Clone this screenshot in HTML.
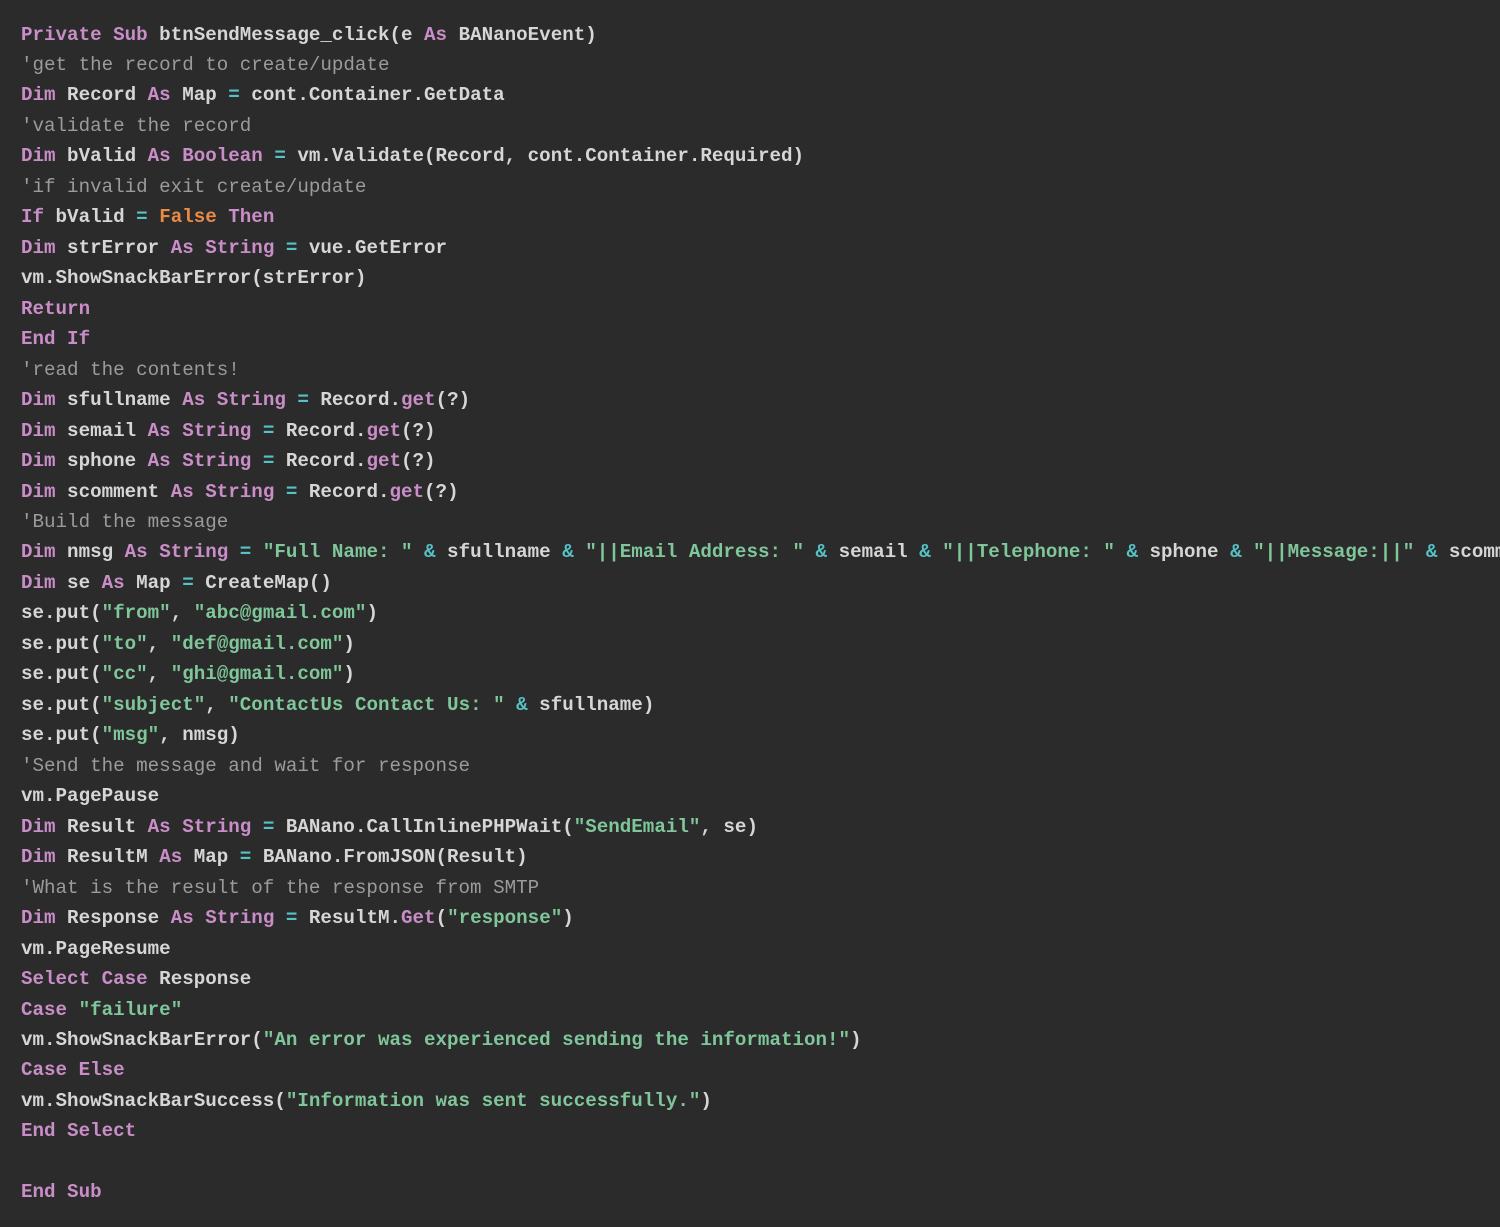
<!DOCTYPE html>
<html><head><meta charset="utf-8"><style>
html,body{margin:0;padding:0;background:#2b2b2b;width:1500px;height:1227px;overflow:hidden}
pre{margin:0;padding:19.5px 0 0 21px;font-family:"Liberation Mono",monospace;font-size:19.2px;line-height:30.47px;color:#d6d6d6;font-weight:bold;white-space:pre}
.k{color:#c98dc8}.o{color:#56c2c6}.s{color:#7fc79a}.c{color:#9b9b9b;font-weight:normal}.f{color:#e98b45}
</style></head><body><pre><span class="k">Private Sub</span> btnSendMessage_click(e <span class="k">As</span> BANanoEvent)
<span class="c">'get the record to create/update</span>
<span class="k">Dim</span> Record <span class="k">As</span> Map <span class="o">=</span> cont.Container.GetData
<span class="c">'validate the record</span>
<span class="k">Dim</span> bValid <span class="k">As</span> <span class="k">Boolean</span> <span class="o">=</span> vm.Validate(Record, cont.Container.Required)
<span class="c">'if invalid exit create/update</span>
<span class="k">If</span> bValid <span class="o">=</span> <span class="f">False</span> <span class="k">Then</span>
<span class="k">Dim</span> strError <span class="k">As</span> <span class="k">String</span> <span class="o">=</span> vue.GetError
vm.ShowSnackBarError(strError)
<span class="k">Return</span>
<span class="k">End If</span>
<span class="c">'read the contents!</span>
<span class="k">Dim</span> sfullname <span class="k">As</span> <span class="k">String</span> <span class="o">=</span> Record.<span class="k">get</span>(?)
<span class="k">Dim</span> semail <span class="k">As</span> <span class="k">String</span> <span class="o">=</span> Record.<span class="k">get</span>(?)
<span class="k">Dim</span> sphone <span class="k">As</span> <span class="k">String</span> <span class="o">=</span> Record.<span class="k">get</span>(?)
<span class="k">Dim</span> scomment <span class="k">As</span> <span class="k">String</span> <span class="o">=</span> Record.<span class="k">get</span>(?)
<span class="c">'Build the message</span>
<span class="k">Dim</span> nmsg <span class="k">As</span> <span class="k">String</span> <span class="o">=</span> <span class="s">"Full Name: "</span> <span class="o">&amp;</span> sfullname <span class="o">&amp;</span> <span class="s">"||Email Address: "</span> <span class="o">&amp;</span> semail <span class="o">&amp;</span> <span class="s">"||Telephone: "</span> <span class="o">&amp;</span> sphone <span class="o">&amp;</span> <span class="s">"||Message:||"</span> <span class="o">&amp;</span> scomment
<span class="k">Dim</span> se <span class="k">As</span> Map <span class="o">=</span> CreateMap()
se.put(<span class="s">"from"</span>, <span class="s">"abc@gmail.com"</span>)
se.put(<span class="s">"to"</span>, <span class="s">"def@gmail.com"</span>)
se.put(<span class="s">"cc"</span>, <span class="s">"ghi@gmail.com"</span>)
se.put(<span class="s">"subject"</span>, <span class="s">"ContactUs Contact Us: "</span> <span class="o">&amp;</span> sfullname)
se.put(<span class="s">"msg"</span>, nmsg)
<span class="c">'Send the message and wait for response</span>
vm.PagePause
<span class="k">Dim</span> Result <span class="k">As</span> <span class="k">String</span> <span class="o">=</span> BANano.CallInlinePHPWait(<span class="s">"SendEmail"</span>, se)
<span class="k">Dim</span> ResultM <span class="k">As</span> Map <span class="o">=</span> BANano.FromJSON(Result)
<span class="c">'What is the result of the response from SMTP</span>
<span class="k">Dim</span> Response <span class="k">As</span> <span class="k">String</span> <span class="o">=</span> ResultM.<span class="k">Get</span>(<span class="s">"response"</span>)
vm.PageResume
<span class="k">Select Case</span> Response
<span class="k">Case</span> <span class="s">"failure"</span>
vm.ShowSnackBarError(<span class="s">"An error was experienced sending the information!"</span>)
<span class="k">Case Else</span>
vm.ShowSnackBarSuccess(<span class="s">"Information was sent successfully."</span>)
<span class="k">End Select</span>

<span class="k">End Sub</span>
</pre></body></html>
